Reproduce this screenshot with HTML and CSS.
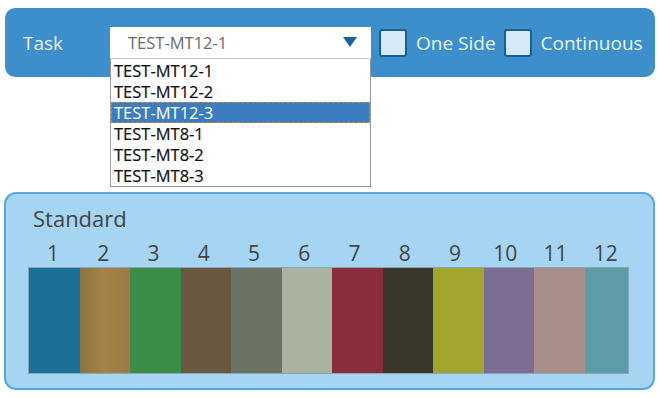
FILE: index.html
```html
<!DOCTYPE html>
<html lang="en">
<head>
  <meta charset="UTF-8">
  <title>Standard Colors</title>
  <link rel="stylesheet" href="styles.css">
</head>
<body>

  <div class="toolbar">
    <span class="task-label">Task</span>

    <div class="task-select">
      <div class="select-box">
        <span class="select-value">TEST-MT12-1</span>
        <svg class="select-arrow" width="14" height="10" viewBox="0 0 14 10"><polygon points="0,0 14,0 7,10" fill="#1a62a8"/></svg>
      </div>
      <!-- open dropdown list -->
      <ul class="select-list">
        <li>TEST-MT12-1</li>
        <li>TEST-MT12-2</li>
        <li class="selected">TEST-MT12-3</li>
        <li>TEST-MT8-1</li>
        <li>TEST-MT8-2</li>
        <li>TEST-MT8-3</li>
      </ul>
    </div>

    <label class="check"><span class="box"></span>One Side</label>
    <label class="check"><span class="box"></span>Continuous</label>
  </div>

  <div class="panel">
    <div class="panel-title">Standard</div>
    <div class="numbers">
      <span>1</span><span>2</span><span>3</span><span>4</span><span>5</span><span>6</span>
      <span>7</span><span>8</span><span>9</span><span>10</span><span>11</span><span>12</span>
    </div>
    <div class="strips">
      <div class="strip c1"></div>
      <div class="strip c2"></div>
      <div class="strip c3"></div>
      <div class="strip c4"></div>
      <div class="strip c5"></div>
      <div class="strip c6"></div>
      <div class="strip c7"></div>
      <div class="strip c8"></div>
      <div class="strip c9"></div>
      <div class="strip c10"></div>
      <div class="strip c11"></div>
      <div class="strip c12"></div>
    </div>
  </div>

</body>
</html>
```

FILE: styles.css
```css
body {
  margin: 0;
  background-color: #fff;
  font-family: "Open Sans", "Noto Sans", sans-serif;
}
.toolbar {
  display: flex;
  align-items: center;
  height: 69px;
  margin: 8px 5px 0 5px;
  background-color: #3d8fcb;
  border-radius: 10px;
  color: #eaf3fb;
  font-size: 19px;
}
.task-label {
  width: 105px;
  padding-left: 18px;
  box-sizing: border-box;
}
.task-select {
  position: relative;
  width: 261px;
  margin-right: 8px;
}
.select-box {
  display: flex;
  align-items: center;
  justify-content: space-between;
  height: 31px;
  padding: 0 14px 0 18px;
  background-color: #fff;
  border-bottom: 1px solid #c8c8c8;
}
.select-value {
  color: #6a6a6a;
  font-size: 16.5px;
}
.select-arrow {
  display: block;
}
.select-list {
  position: absolute;
  top: 32px;
  left: 0;
  width: 261px;
  box-sizing: border-box;
  margin: 0;
  padding: 1px 0 0 0;
  list-style: none;
  background-color: #fff;
  border: 1px solid #9a9a9a;
  border-top: none;
  font-size: 16.5px;
  color: #111;
  -webkit-text-stroke: 0.2px #111;
}
.select-list li {
  height: 21px;
  line-height: 21px;
  padding-left: 3px;
}
.select-list li.selected {
  background-color: #3d7dbf;
  color: #fff;
  -webkit-text-stroke: 0;
  outline: 1px dashed #c8883a;
  outline-offset: -1px;
}
.check {
  display: flex;
  align-items: center;
  margin-right: 8px;
}
.box {
  width: 24px;
  height: 24px;
  margin-right: 9px;
  background-color: #d5e9f8;
  border: 2px solid #1b5d99;
  border-radius: 3px;
}
.panel {
  margin: 115px 5px 0 4px;
  height: 194px;
  background-color: #a6d5f3;
  border: 2px solid #5aa7dc;
  border-radius: 12px;
  color: #444;
  padding: 0 22px;
}
.panel-title {
  font-size: 22px;
  line-height: 26px;
  margin-top: 11px;
  padding-left: 5px;
}
.numbers {
  display: flex;
  font-size: 21px;
  line-height: 26px;
  margin: 9px 0 1px 0;
}
.numbers span {
  width: 50.5px;
  text-align: center;
}
.strips {
  display: flex;
  width: 601px;
  height: 107px;
  box-sizing: border-box;
  border: 1px solid #8aa4b8;
}
.strip {
  width: 50.5px;
}
.strip.c12 { flex: 1; }
.c1 { background-color: #1b6e96; }
.c2 { background: linear-gradient(to right, #8a7442, #a38248 45%, #9c7a46); }
.c3 { background-color: #3a8d46; }
.c4 { background-color: #6a5740; }
.c5 { background-color: #6a7361; }
.c6 { background-color: #a9b3a0; }
.c7 { background-color: #892c3b; }
.c8 { background-color: #3b382b; }
.c9 { background-color: #a3a62e; }
.c10 { background-color: #7b6e92; }
.c11 { background-color: #a98f89; }
.c12 { background-color: #5e9da7; }
```
